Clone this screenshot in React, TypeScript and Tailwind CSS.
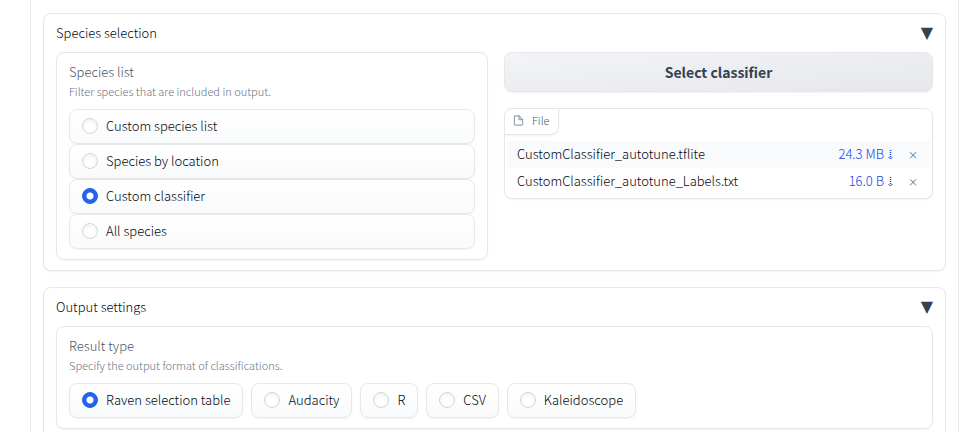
import { useState } from "react";
import type { ReactNode } from "react";

function Section({ title, children }: { title: string; children: ReactNode }) {
  return (
    <section className="rounded-lg border border-gray-200 bg-white px-3 py-[10px] shadow-[0_1px_2px_rgba(0,0,0,0.05)]">
      <button type="button" className="mb-[10px] flex w-full items-center justify-between text-left text-[13px] leading-[18px] font-light text-gray-950">
        <span>{title}</span>
        <span aria-hidden="true" className="font-['DejaVu_Sans',sans-serif] text-base leading-[18px] font-normal text-gray-700">▼</span>
      </button>
      {children}
    </section>
  );
}

type RadioPanelProps = {
  name: string;
  label: string;
  info: string;
  options: string[];
  initial: string;
  stacked?: boolean;
};

function RadioPanel({ name, label, info, options, initial, stacked = false }: RadioPanelProps) {
  const [selected, setSelected] = useState(initial);
  return (
    <fieldset className="min-w-0 rounded-lg border border-gray-200 bg-white px-3 py-[10px] shadow-[0_1px_2px_rgba(0,0,0,0.05)]">
      <legend className="float-left w-full text-[13px] leading-[18px] font-light text-gray-600">{label}</legend>
      <p className="clear-both mb-[10px] pt-[2px] text-[11px] leading-4 font-light text-gray-500">{info}</p>
      <div className={stacked ? "flex flex-col" : "flex flex-wrap gap-2"}>
        {options.map((option) => (
          <label
            key={option}
            className="flex items-center gap-2 rounded-lg border border-gray-200 bg-linear-to-b from-white to-gray-50 px-3 pt-2 pb-[9px] text-[13px] leading-4 font-light text-gray-950 shadow-[0_1px_2px_rgba(0,0,0,0.05)]"
          >
            <input
              type="radio"
              name={name}
              value={option}
              checked={selected === option}
              onChange={() => setSelected(option)}
              className="size-4 shrink-0 appearance-none rounded-full border border-gray-300 bg-white shadow-[inset_0_2px_4px_rgba(0,0,0,0.06)] checked:border-[#2563eb] checked:bg-[#2563eb] checked:bg-[radial-gradient(circle,#fff_3px,#2563eb_4px)] checked:shadow-none"
            />
            <span>{option}</span>
          </label>
        ))}
      </div>
    </fieldset>
  );
}

const files = [
  { name: "CustomClassifier_autotune.tflite", size: "24.3 MB" },
  { name: "CustomClassifier_autotune_Labels.txt", size: "16.0 B" },
];

function DownloadArrow() {
  return (
    <svg viewBox="0 0 5 10" className="ml-1 inline-block h-[10px] w-[5px] align-middle" fill="none" stroke="currentColor" aria-hidden="true">
      <path d="M2.5 0v8" strokeDasharray="1 1" strokeWidth="1.5" />
      <path d="M0.5 7l2 2 2-2" strokeWidth="1" />
    </svg>
  );
}

function FilePanel() {
  return (
    <div className="overflow-hidden rounded-lg border border-gray-200 bg-white pb-[3px] shadow-[0_1px_2px_rgba(0,0,0,0.05)]">
      <div className="flex">
        <div className="flex items-center gap-2 rounded-br-lg border-r border-b border-gray-200 px-2 pt-1 pb-[6px] text-[11px] leading-[15px] font-light text-gray-600 shadow-[0_1px_2px_rgba(0,0,0,0.05)]">
          <svg viewBox="0 0 24 24" className="size-[11px] text-gray-400" fill="none" stroke="currentColor" strokeWidth="2.5" strokeLinecap="round" strokeLinejoin="round">
            <path d="M13 2H5a2 2 0 0 0-2 2v16a2 2 0 0 0 2 2h14a2 2 0 0 0 2-2V10z" />
            <path d="M13 2v8h8" />
          </svg>
          <span>File</span>
        </div>
      </div>
      <table className="mx-[2px] mt-[6px] w-[calc(100%-4px)] text-[13px] leading-[25px] font-light text-gray-950">
        <tbody>
          {files.map((file) => (
            <tr key={file.name} className="h-[27px] align-top odd:bg-gray-50">
              <td className="py-0 pl-[10px]">{file.name}</td>
              <td className="py-0 pr-[3px] text-right">
                <a href="#download" className="text-[#1447e6]">
                  {file.size}
                  <DownloadArrow />
                </a>
              </td>
              <td className="w-[34px] py-0 text-center">
                <button type="button" aria-label={`Remove ${file.name}`} className="text-[10px] font-normal text-gray-500">
                  ×
                </button>
              </td>
            </tr>
          ))}
        </tbody>
      </table>
    </div>
  );
}

export default function App() {
  return (
    <div className="h-screen overflow-hidden bg-white pr-5 pl-[30px] font-['Noto_Sans_CJK_SC',sans-serif]">
      <main className="flex min-h-full flex-col gap-4 border-x border-gray-200 px-3 pt-[13px] pb-4">
        <Section title="Species selection">
          <div className="grid grid-cols-[432fr_429fr] items-start gap-4">
            <RadioPanel
              name="species"
              label="Species list"
              info="Filter species that are included in output."
              options={["Custom species list", "Species by location", "Custom classifier", "All species"]}
              initial="Custom classifier"
              stacked
            />
            <div className="flex min-w-0 flex-col gap-4">
              <button
                type="button"
                className="rounded-lg border border-gray-200 bg-linear-to-br from-gray-100 to-gray-200 py-[7px] text-sm leading-6 font-semibold text-gray-700 shadow-[0_1px_2px_rgba(0,0,0,0.05)]"
              >
                Select classifier
              </button>
              <FilePanel />
            </div>
          </div>
        </Section>
        <Section title="Output settings">
          <RadioPanel
            name="result"
            label="Result type"
            info="Specify the output format of classifications."
            options={["Raven selection table", "Audacity", "R", "CSV", "Kaleidoscope"]}
            initial="Raven selection table"
          />
        </Section>
      </main>
    </div>
  );
}
